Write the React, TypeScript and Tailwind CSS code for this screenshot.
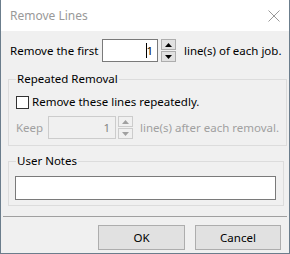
import React from "react";

function Spinner({ disabled }: { disabled?: boolean }) {
  const border = disabled ? "border-[#cccccc]" : "border-[#adadad]";
  const bg = disabled ? "bg-[#f0f0f0]" : "bg-[#e1e1e1]";
  const fill = disabled ? "#a0a0a0" : "#000000";
  return (
    <div className="flex flex-col gap-[1px] w-[15px] shrink-0">
      <div className={`h-[11px] border ${border} ${bg} flex items-center justify-center`}>
        <svg width="7" height="4" viewBox="0 0 7 4">
          <path d="M3.5 0 L7 4 L0 4 Z" fill={fill} />
        </svg>
      </div>
      <div className={`h-[11px] border ${border} ${bg} flex items-center justify-center`}>
        <svg width="7" height="4" viewBox="0 0 7 4">
          <path d="M0 0 L7 0 L3.5 4 Z" fill={fill} />
        </svg>
      </div>
    </div>
  );
}

export default function App() {
  return (
    <div
      className="w-[290px] h-[254px] bg-[#f0f0f0] border-x border-b border-[#6b7d8c] flex flex-col text-[11.5px] leading-[16px] text-black whitespace-nowrap"
      style={{ fontFamily: '"Noto Sans", "Liberation Sans", sans-serif' }}
    >
      {/* title bar */}
      <div className="h-[31px] bg-white flex items-center justify-between pl-[9px] pr-[9px] shrink-0">
        <span className="text-[#999999] text-[12px]">Remove Lines</span>
        <svg width="12" height="12" viewBox="0 0 12 12" className="mt-[1px]">
          <path d="M0.5 0.5 L11.5 11.5 M11.5 0.5 L0.5 11.5" stroke="#999999" strokeWidth="1" />
        </svg>
      </div>

      <div className="flex-1 flex flex-col">
        {/* first row */}
        <div className="flex items-center h-[23px] mt-[8px] pl-[9px]">
          <span className="w-[86px] shrink-0">Remove the first</span>
          <div className="ml-[6px] w-[56px] shrink-0 h-[23px] bg-white border border-[#7a7a7a] flex items-center justify-end pr-[4px]">
            <span className="border-l border-black h-[15px] mr-[-1px]" />
            <span>1</span>
          </div>
          <div className="ml-[3px]">
            <Spinner />
          </div>
          <span className="ml-[8px]">line(s) of each job.</span>
        </div>

        {/* repeated removal */}
        <fieldset className="mt-[9px] mx-[7px] w-[276px] border border-[#dcdcdc] pl-[7px] pr-[7px] pb-[6px]">
          <legend className="px-[1px]">Repeated Removal</legend>
          <label className="flex items-center h-[16px] mt-[7px]">
            <span className="w-[13px] h-[13px] shrink-0 border border-[#333333] bg-white" />
            <span className="ml-[3px]">Remove these lines repeatedly.</span>
          </label>
          <div className="flex items-center h-[23px] mt-[6px] text-[#a0a0a0]">
            <span className="w-[24px] shrink-0">Keep</span>
            <div className="ml-[8px] w-[68px] shrink-0 h-[23px] bg-[#f0f0f0] border border-[#cccccc] flex items-center justify-end pr-[5px] text-[#838383]">
              1
            </div>
            <div className="ml-[2px]">
              <Spinner disabled />
            </div>
            <span className="ml-[7px]">line(s) after each removal.</span>
          </div>
        </fieldset>

        {/* user notes */}
        <fieldset className="mt-[7px] mx-[7px] w-[276px] border border-[#dcdcdc] pl-[6px] pr-[7px] pb-[5px]">
          <legend className="ml-[1px] px-[1px]">User Notes</legend>
          <div className="mt-[7px] h-[24px] bg-white border border-[#7a7a7a]" />
        </fieldset>

        <div className="mt-[10px] mx-[2px] h-[1px] bg-[#a0a0a0]" />

        <div className="flex justify-end gap-[10px] mt-[8px] pr-[8px]">
          <button className="w-[87px] h-[25px] bg-[#e1e1e1] border border-[#adadad]">OK</button>
          <button className="w-[86px] h-[25px] bg-[#e1e1e1] border border-[#adadad]">Cancel</button>
        </div>
      </div>
    </div>
  );
}
